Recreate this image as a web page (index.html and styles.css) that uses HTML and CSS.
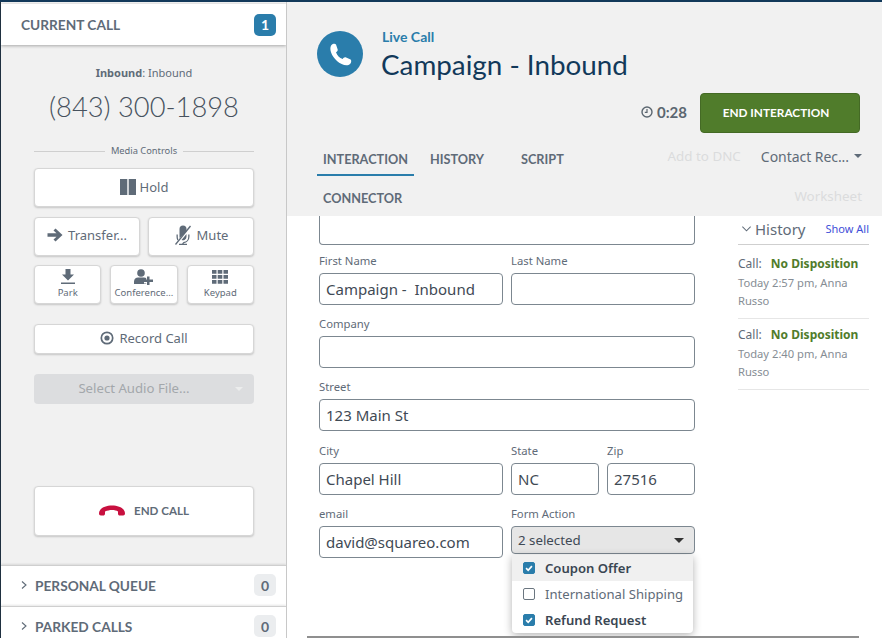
FILE: index.html
```html
<!DOCTYPE html>
<html lang="en">
<head>
<meta charset="utf-8">
<title>Live Call</title>
<link rel="stylesheet" href="styles.css">
</head>
<body>
<div class="app">
  <aside class="side">
    <div class="bar bar-current"><span>CURRENT CALL</span><span class="count count-on">1</span></div>
    <div class="call">
      <p class="call-type"><b>Inbound</b>: Inbound</p>
      <p class="call-num">(843) 300-1898</p>
      <div class="divider"><span>Media Controls</span></div>
      <button class="btn btn-wide"><svg class="i-hold" viewBox="0 0 16 16"><path d="M0 0h7.300v16H0zM8.700 0H16v16H8.700z"/></svg>Hold</button>
      <div class="two">
        <button class="btn btn-wide"><svg class="i16" viewBox="0 0 16 16"><path d="M8.500 1.500 15.500 8l-7 6.500-2-2L9.500 9.800H.5V6.200h9L6.500 3.500z"/></svg>Transfer...</button>
        <button class="btn btn-wide"><svg class="i-mute" viewBox="0 0 18 20"><path d="M5.500 4a3.500 3.500 0 0 1 7 0v2.500L5.700 13a3.500 3.500 0 0 1-.2-1.200zM12.500 9v2.800a3.500 3.500 0 0 1-5 3.100zM2.500 9.500h1.300v2.300c0 1 .2 1.800.6 2.600l-1 1a7 7 0 0 1-.9-3.600zM14.200 9.500h1.300v2.300a6.500 6.500 0 0 1-5.800 6.400v.6H13V20H5v-1.200h3.300v-.6l1.200-1.200a5.200 5.200 0 0 0 4.700-5.200z"/><path d="M1.500 19.500 16.500 1" stroke="#5f6b78" stroke-width="1.300" fill="none"/></svg>Mute</button>
      </div>
      <div class="three">
        <button class="btn btn-small"><svg class="i16" viewBox="0 0 16 16"><path d="M5.500 0h5v5.500H14L8 11.500 2 5.500h3.500zM1 13.500h14V15H1z"/></svg>Park</button>
        <button class="btn btn-small"><svg class="i19" viewBox="0 0 19 16"><circle cx="7" cy="4" r="3.800"/><path d="M0 15v-2.500C0 10 2 8.500 4 8.500h6c.8 0 1.500.2 2.200.6V11H10v3.500h2.200V15zM13 7.500h2.500v3H19V13h-3.500v3H13v-3H9.800v-2.500H13z"/></svg>Conference...</button>
        <button class="btn btn-small"><svg class="i16" viewBox="0 0 16 16"><path d="M0 1h4.500v3.800H0zM5.700 1h4.600v3.800H5.700zM11.500 1H16v3.800h-4.500zM0 6h4.500v3.800H0zM5.700 6h4.600v3.800H5.700zM11.500 6H16v3.800h-4.500zM0 11h4.500v3.800H0zM5.700 11h4.600v3.800H5.700zM11.500 11H16v3.800h-4.500z"/></svg>Keypad</button>
      </div>
      <button class="btn btn-record"><svg class="i14" viewBox="0 0 14 14"><circle cx="7" cy="7" r="5.700" fill="none" stroke="#5f6b78" stroke-width="1.700"/><circle cx="7" cy="7" r="2.600"/></svg>Record Call</button>
      <div class="audio"><span>Select Audio File...</span><i class="caret caret-light"></i></div>
      <button class="btn btn-end"><svg class="hang" viewBox="0 0 26 11"><path d="M0 8.500C0 3.500 6 .5 13 .5s13 3 13 8c0 1.200-.8 2-1.800 2h-3.400c-1 0-1.800-.8-1.800-1.800V6.500C17.500 5.500 15.500 5 13 5s-4.500.5-7 1.500v2.200c0 1-.8 1.800-1.800 1.800H1.800C.8 10.500 0 9.700 0 8.500z"/></svg>END CALL</button>
    </div>
    <div class="bar bar-queue"><svg class="chev" viewBox="0 0 8 10"><path d="M2 1.500 6 5 2 8.500"/></svg><span class="bar-title">PERSONAL QUEUE</span><span class="count">0</span></div>
    <div class="bar bar-queue"><svg class="chev" viewBox="0 0 8 10"><path d="M2 1.500 6 5 2 8.500"/></svg><span class="bar-title">PARKED CALLS</span><span class="count">0</span></div>
  </aside>

  <main class="main">
    <header class="head">
      <div class="ident">
        <div class="avatar"><svg viewBox="0 0 24 24"><path d="M4 3.500C5 2.500 7 2 8 3l1.500 4.500c.3 1-.5 2-1.500 2.500 1 3 3 5 6 6 .5-1 1.500-1.800 2.500-1.500l4.500 2c1 1 .5 3-.5 4-1.500 1.500-4.500 1.500-7.500 0C7 17.500 3 11 3 7c0-1.500.3-2.700 1-3.500z"/></svg></div>
        <div class="ident-text">
          <div class="live">Live Call</div>
          <h1>Campaign - Inbound</h1>
        </div>
      </div>
      <div class="timer-row">
        <svg class="clock" viewBox="0 0 12 12"><circle cx="6" cy="6" r="5" fill="none" stroke="#5b6670" stroke-width="1.400"/><path d="M6 3v3.300H3.800" fill="none" stroke="#5b6670" stroke-width="1.200"/></svg>
        <span class="time">0:28</span>
        <button class="end-int">END INTERACTION</button>
      </div>
      <div class="nav">
        <div class="tabs">
          <span class="tab tab-on">INTERACTION</span>
          <span class="tab tab-history">HISTORY</span>
          <span class="tab tab-script">SCRIPT</span>
          <span class="tab">CONNECTOR</span>
        </div>
        <div class="actions">
          <div class="act-row"><span class="muted">Add to DNC</span><span class="contact">Contact Rec...</span><i class="caret"></i></div>
          <div class="act-row act-row-2"><span class="muted">Worksheet</span></div>
        </div>
      </div>
    </header>

    <div class="content">
      <form class="form">
        <input class="field field-top" type="text">
        <div class="row">
          <label class="cell"><span>First Name</span><input class="field" type="text" value="Campaign -  Inbound"></label>
          <label class="cell"><span>Last Name</span><input class="field" type="text"></label>
        </div>
        <label class="cell"><span>Company</span><input class="field" type="text"></label>
        <label class="cell"><span>Street</span><input class="field" type="text" value="123 Main St"></label>
        <div class="row row-city">
          <label class="cell"><span>City</span><input class="field" type="text" value="Chapel Hill"></label>
          <div class="row row-split">
            <label class="cell"><span>State</span><input class="field" type="text" value="NC"></label>
            <label class="cell"><span>Zip</span><input class="field" type="text" value="27516"></label>
          </div>
        </div>
        <div class="row">
          <label class="cell"><span>email</span><input class="field" type="text" value="david@squareo.com"></label>
          <div class="cell select-wrap">
            <span>Form Action</span>
            <div class="select"><span>2 selected</span><i class="caret caret-dark"></i></div>
            <ul class="menu">
              <li class="opt opt-hover opt-on"><i class="box box-on"><svg viewBox="0 0 12 12"><path d="M2.500 6.200 5 8.700l4.500-5"/></svg></i>Coupon Offer</li>
              <li class="opt"><i class="box"></i>International Shipping</li>
              <li class="opt opt-on"><i class="box box-on"><svg viewBox="0 0 12 12"><path d="M2.500 6.200 5 8.700l4.500-5"/></svg></i>Refund Request</li>
            </ul>
          </div>
        </div>
      </form>
      <section class="hist">
        <div class="hist-head"><svg class="chev-down" viewBox="0 0 12 8"><path d="M1.500 1.500 6 6l4.500-4.500"/></svg><span class="hist-title">History</span><a class="show">Show All</a></div>
        <div class="hist-item hist-item-first"><p class="hist-line">Call: <b>No Disposition</b></p><p class="hist-meta">Today 2:57 pm, Anna Russo</p></div>
        <div class="hist-item"><p class="hist-line">Call: <b>No Disposition</b></p><p class="hist-meta">Today 2:40 pm, Anna Russo</p></div>
      </section>
      <div class="hscroll"></div>
    </div>
  </main>
</div>
</body>
</html>
```
FILE: styles.css
```css
* { box-sizing: border-box; }
html, body { margin: 0; height: 100%; overflow: hidden; }
body { font-family: "Noto Sans", sans-serif; color: #5f6b78; background: #fff; }
p, h1, ul { margin: 0; padding: 0; }
.app { display: flex; height: 638px; border-top: 2px solid #12395a; overflow: hidden; }

.side { width: 287px; flex: none; background: #f1f1f1; border-left: 1px solid #1f3040; border-right: 1px solid #c8c8c8; display: flex; flex-direction: column; overflow: hidden; }
.bar { display: flex; align-items: center; background: #fff; font-family: Lato, sans-serif; font-weight: 700; color: #5f6b78; font-size: 13.700px; flex: none; }
.bar-current { height: 41px; margin-top: 2px; padding: 0 10px 0 20px; justify-content: space-between; box-shadow: 0 1px 3px rgba(0,0,0,.3); }
.bar-queue { height: 41px; padding: 0 10px 2px 19px; border-top: 1px solid #cfcfcf; box-shadow: 0 -1px 2px rgba(0,0,0,.1); }
.bar-title { flex: 1; margin-left: 7px; }
.chev { width: 8px; height: 10px; fill: none; stroke: #5f6b78; stroke-width: 1.100; }
.count { width: 22px; height: 22px; border-radius: 5px; background: #ebedef; display: flex; align-items: center; justify-content: center; font-size: 14px; }
.count-on { background: #2a7dab; color: #fff; }

.call { height: 520px; flex: none; display: flex; flex-direction: column; padding: 0 32px 0 33px; }
.call-type { margin-top: 20px; font-size: 11px; line-height: 16px; text-align: center; }
.call-num { margin-top: 8px; font-family: Lato, sans-serif; font-weight: 300; font-size: 27.300px; line-height: 36px; text-align: center; color: #47525e; }
.divider { display: flex; align-items: center; gap: 6px; margin-top: 19px; font-size: 9.300px; line-height: 14px; }
.divider span { flex: none; }
.divider::before, .divider::after { content: ""; flex: 1; height: 1px; background: #cfcfcf; }
.btn { display: flex; align-items: center; justify-content: center; gap: 4px; border: 1px solid #d6d6d6; border-radius: 4px; background: #fff; box-shadow: 0 1px 2px rgba(0,0,0,.18); color: #5f6b78; font-family: "Noto Sans", sans-serif; padding: 0 0 1px; fill: #5f6b78; flex: none; }
.btn-wide { height: 39px; width: 100%; margin-top: 10px; font-size: 13px; padding-bottom: 2px; }
.two { display: grid; grid-template-columns: 1fr 1fr; gap: 8px; margin-top: 10px; }
.two .btn-wide { margin-top: 0; padding-bottom: 3px; gap: 5px; }
.three { display: grid; grid-template-columns: repeat(3, 1fr); gap: 9px; margin-top: 9px; }
.btn-small { height: 39px; flex-direction: column; gap: 1px; font-size: 9.500px; white-space: nowrap; }
.btn-record { height: 30px; margin-top: 20px; font-size: 13px; gap: 5px; padding-bottom: 2px; }
.audio { position: relative; height: 30px; margin-top: 20px; padding: 0 20px 2px 0; border-radius: 4px; background: #dcdddf; color: #a3a7ab; font-size: 13.200px; display: flex; align-items: center; justify-content: center; flex: none; }
.btn-end { height: 50px; margin-top: 82px; font-family: Lato, sans-serif; font-weight: 700; font-size: 11.600px; gap: 9px; padding-bottom: 2px; }
.i14 { width: 14px; height: 14px; }
.i16 { width: 16px; height: 16px; }
.i-hold { width: 16px; height: 16px; }
.i-mute { width: 18px; height: 20px; }
.i19 { width: 19px; height: 16px; }
.hang { width: 26px; height: 11px; fill: #c8103f; }

.caret { display: inline-block; width: 0; height: 0; border: 4px solid transparent; border-top: 4px solid #5f6b78; border-bottom: 0; }
.caret-light { position: absolute; right: 11px; top: 13px; border-top-color: #eceded; }
.caret-dark { border-width: 5px 5px 0; border-top-color: #333; }

.main { flex: 1; min-width: 0; display: flex; flex-direction: column; }
.head { height: 214px; flex: none; background: #f1f1f1; padding: 29px 20px 0 30px; }
.ident { display: flex; gap: 19px; }
.avatar { width: 46px; height: 46px; border-radius: 50%; background: #2a7dab; display: flex; align-items: center; justify-content: center; fill: #fff; flex: none; }
.avatar svg { width: 27px; height: 27px; }
.live { font-family: Lato, sans-serif; font-weight: 700; font-size: 14px; line-height: 16px; color: #2a7dab; margin-top: -2px; }
h1 { font-family: Lato, sans-serif; font-weight: 400; font-size: 27.800px; line-height: 36px; color: #12395a; margin-top: 2px; margin-left: -1px; }
.timer-row { display: flex; align-items: center; justify-content: flex-end; gap: 4px; margin: 10px 2px 0 0; }
.clock { width: 12px; height: 12px; margin-bottom: 2px; }
.time { font-family: Lato, sans-serif; font-weight: 700; font-size: 15px; color: #5b6670; margin: 0 9px 2px 0; }
.end-int { width: 160px; height: 40px; background: #507c2b; border: 1px solid #446a25; border-radius: 4px; color: #fff; font-family: Lato, sans-serif; font-weight: 700; font-size: 11.800px; padding: 0 8px 2px 0; }
.nav { display: flex; justify-content: space-between; }
.tabs { width: 290px; display: flex; flex-wrap: wrap; align-content: flex-start; align-items: flex-start; padding-top: 13px; font-family: Lato, sans-serif; font-weight: 700; font-size: 12.700px; color: #5f6b78; }
.tab { padding: 0 6px; height: 39px; line-height: 26px; }
.tab-on { border-bottom: 2px solid #2a7dab; width: 97px; height: 30px; margin-right: 10px; }
.tab-history { width: 91px; }
.tab-script { width: 80px; }
.actions { padding-top: 11px; font-size: 13.400px; }
.act-row { display: flex; align-items: center; justify-content: flex-end; height: 24px; gap: 5px; }
.act-row-2 { margin-top: 16px; }
.muted { color: #dbdcdd; margin-right: 15px; }
.act-row-2 .muted { margin-right: 0; }
.contact { color: #5f6b78; font-size: 14px; letter-spacing: -.05px; }

.content { position: relative; flex: 1; min-height: 0; display: flex; padding-left: 32px; gap: 43px; }
.form { width: 376px; flex: none; display: flex; flex-direction: column; gap: 11px; }
.row { display: grid; grid-template-columns: 184px 184px; gap: 8px; }
.row-city { margin-top: 1px; }
.row-split { grid-template-columns: 88px 88px; }
.cell { display: flex; flex-direction: column; position: relative; font-size: 11.300px; line-height: 14px; }
.cell > span { margin: 1px 0 5px; }
.field { width: 100%; height: 32px; border: 1px solid #7c8790; border-radius: 4px; padding: 0 6px; font: 15px "Noto Sans", sans-serif; color: #3f4a55; background: #fff; }
.field-top { height: 29px; border-top: 0; border-radius: 0 0 4px 4px; flex: none; margin-bottom: -3px; }
.select { height: 28px; border: 1px solid #7c8790; border-radius: 4px; background: #e6e6e6; display: flex; align-items: center; justify-content: space-between; padding: 0 10px 0 6px; font-size: 13.300px; color: #3f4a55; }
.menu { list-style: none; position: absolute; left: 1px; top: 49px; width: 181px; background: #fff; border-radius: 0 0 4px 4px; box-shadow: 0 2px 8px rgba(0,0,0,.3); font-size: 13.100px; }
.opt { height: 26px; display: flex; align-items: center; gap: 10px; padding-left: 11px; color: #5f6b78; }
.opt-on { font-weight: 600; color: #3a4652; }
.opt-hover { background: #f0f0f0; }
.box { width: 12px; height: 12px; border: 1px solid #6b7680; border-radius: 2px; display: block; }
.box-on { background: #2a7dab; border-color: #2a7dab; }
.box svg { display: block; width: 10px; height: 10px; fill: none; stroke: #fff; stroke-width: 2; }

.hist { width: 131px; flex: none; padding-top: 2px; }
.hist-head { display: flex; align-items: center; height: 27px; padding-bottom: 5px; border-bottom: 1px solid #cfcfcf; }
.chev-down { width: 11px; height: 8px; fill: none; stroke: #5f6b78; stroke-width: 1.100; margin: 0 3px; }
.hist-title { flex: 1; font-size: 15px; }
.show { font-size: 11px; color: #3f50d8; }
.hist-item { padding: 6px 0 8px; border-bottom: 1px solid #e6e6e6; font-size: 12px; }
.hist-item-first { margin-top: 3px; }
.hist-line { line-height: 18px; padding-top: 1px; }
.hist-line b { color: #507c2b; font-weight: 700; margin-left: 6px; }
.hist-meta { font-size: 11.200px; line-height: 18px; color: #868d94; margin-top: 1px; }
.hscroll { position: absolute; left: 20px; right: 23px; bottom: 0; height: 2px; background: #8f8f8f; }
```
